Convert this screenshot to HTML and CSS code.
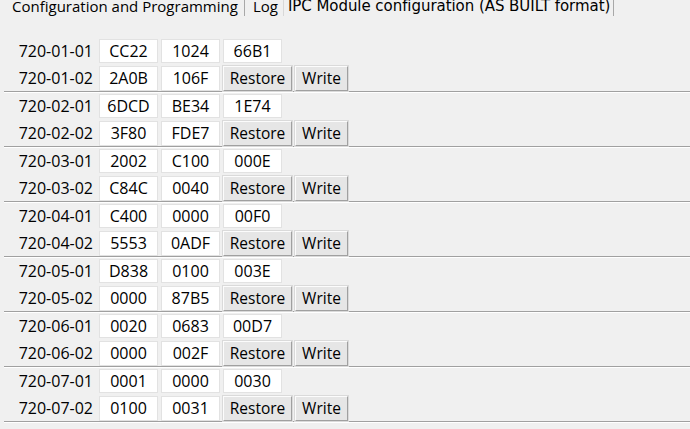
FILE: index.html
```html
<!DOCTYPE html>
<html>
<head>
<meta charset="utf-8">
<link rel="stylesheet" href="styles.css">
</head>
<body>
<div class="tabs">
  <span class="tab">Configuration and Programming</span>
  <span class="sep"></span>
  <span class="tab log">Log</span>
  <span class="sep light"></span>
  <span class="tab active">IPC Module configuration (AS BUILT format)</span>
  <span class="sep end"></span>
</div>
<div class="list">
  <div class="group">
    <div class="row"><span class="lbl">720-01-01</span><span class="cell">CC22</span><span class="cell">1024</span><span class="cell">66B1</span></div>
    <div class="row"><span class="lbl">720-01-02</span><span class="cell">2A0B</span><span class="cell">106F</span><span class="btn restore">Restore</span><span class="btn write">Write</span></div>
  </div>
  <div class="group">
    <div class="row"><span class="lbl">720-02-01</span><span class="cell">6DCD</span><span class="cell">BE34</span><span class="cell">1E74</span></div>
    <div class="row"><span class="lbl">720-02-02</span><span class="cell">3F80</span><span class="cell">FDE7</span><span class="btn restore">Restore</span><span class="btn write">Write</span></div>
  </div>
  <div class="group">
    <div class="row"><span class="lbl">720-03-01</span><span class="cell">2002</span><span class="cell">C100</span><span class="cell">000E</span></div>
    <div class="row"><span class="lbl">720-03-02</span><span class="cell">C84C</span><span class="cell">0040</span><span class="btn restore">Restore</span><span class="btn write">Write</span></div>
  </div>
  <div class="group">
    <div class="row"><span class="lbl">720-04-01</span><span class="cell">C400</span><span class="cell">0000</span><span class="cell">00F0</span></div>
    <div class="row"><span class="lbl">720-04-02</span><span class="cell">5553</span><span class="cell">0ADF</span><span class="btn restore">Restore</span><span class="btn write">Write</span></div>
  </div>
  <div class="group">
    <div class="row"><span class="lbl">720-05-01</span><span class="cell">D838</span><span class="cell">0100</span><span class="cell">003E</span></div>
    <div class="row"><span class="lbl">720-05-02</span><span class="cell">0000</span><span class="cell">87B5</span><span class="btn restore">Restore</span><span class="btn write">Write</span></div>
  </div>
  <div class="group">
    <div class="row"><span class="lbl">720-06-01</span><span class="cell">0020</span><span class="cell">0683</span><span class="cell">00D7</span></div>
    <div class="row"><span class="lbl">720-06-02</span><span class="cell">0000</span><span class="cell">002F</span><span class="btn restore">Restore</span><span class="btn write">Write</span></div>
  </div>
  <div class="group">
    <div class="row"><span class="lbl">720-07-01</span><span class="cell">0001</span><span class="cell">0000</span><span class="cell">0030</span></div>
    <div class="row"><span class="lbl">720-07-02</span><span class="cell">0100</span><span class="cell">0031</span><span class="btn restore">Restore</span><span class="btn write">Write</span></div>
  </div>
</div>
</body>
</html>
```
FILE: styles.css
```css
html, body {
  margin: 0;
  padding: 0;
  background: #f0f0f0;
  overflow: hidden;
}
body {
  width: 690px;
  height: 429px;
  font-family: "Open Sans", "Noto Sans", sans-serif;
  color: #000;
}
.tabs {
  display: flex;
  align-items: flex-start;
  height: 18px;
  padding-left: 12px;
  margin-top: -4px;
  overflow: visible;
}
.tab {
  font-size: 15px;
  line-height: 21px;
  white-space: nowrap;
}
.tab.log {
  margin-left: 8px;
}
.tab.active {
  font-family: "DejaVu Sans", sans-serif;
  font-size: 15px;
  letter-spacing: -0.05px;
  margin-left: 4px;
  line-height: 21px;
}
.sep {
  width: 1px;
  height: 16px;
  margin-top: 4px;
  margin-left: 6px;
  background: #a8a8a8;
}
.sep.light {
  background: #d8d8d8;
  margin-left: 5px;
}
.sep.end {
  margin-left: 3px;
}
.list {
  padding-top: 24px;
}
.group {
  display: flex;
  flex-direction: column;
  gap: 3px;
  padding-top: 1px;
  margin-left: 4px;
  border-bottom: 1px solid #a0a0a0;
  box-shadow: 0 1px 0 #ffffff;
  margin-bottom: 1px;
}
.row {
  display: flex;
  align-items: stretch;
  height: 24px;
}
.row + .row {
  height: 25px;
}
.lbl {
  width: 89px;
  text-align: right;
  font-size: 16px;
  line-height: 24px;
  padding-right: 6px;
}
.cell {
  width: 57px;
  margin-right: 3px;
  background: #ffffff;
  border: 1px solid #e2e2e2;
  text-align: center;
  font-size: 16px;
  line-height: 22px;
}
.btn {
  box-sizing: border-box;
  font-size: 15.5px;
  line-height: 23px;
  text-align: center;
  background: #e6e6e6;
  border: 1px solid;
  border-color: #fcfcfc #a0a0a0 #a0a0a0 #fcfcfc;
  box-shadow: 0 0 0 1px #dadada;
  height: 25px;
}
.btn.restore {
  width: 69px;
  margin-right: 3px;
}
.btn.write {
  width: 53px;
}
```
